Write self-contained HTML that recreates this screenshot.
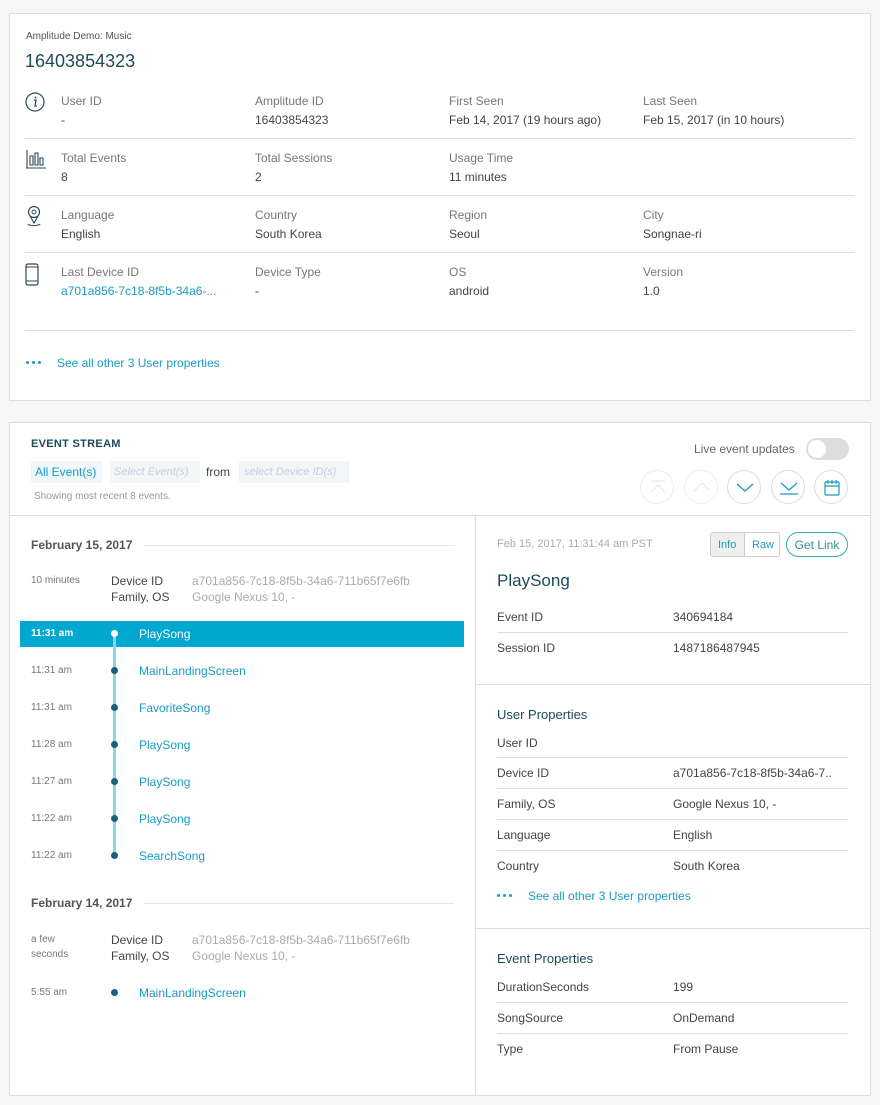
<!DOCTYPE html>
<html><head><style>
*{box-sizing:border-box;margin:0;padding:0}
body{width:880px;height:1105px;background:#f6f6f6;font-family:"Liberation Sans",sans-serif;position:relative;overflow:hidden;color:#444}
.a{position:absolute;white-space:nowrap;line-height:1}
.card{position:absolute;background:#fff;border:1px solid #ddd}
.lab{font-size:12px;color:#777}
.val{font-size:12px;color:#444}
.hl{position:absolute;height:1px;background:#ddd}
.link{color:#1a9ac4}
.t{font-size:10px;color:#777}
.ev{font-size:12px;color:#1a9ac4}
.dot{position:absolute;width:7px;height:7px;border-radius:50%;background:#15607a}
.cb{position:absolute;width:34px;height:34px;border-radius:50%;border:1px solid #ddd;background:#fff}
.dots{position:absolute;height:3px;display:flex;gap:3px}
.dots i{display:block;width:3px;height:3px;border-radius:50%;background:#1a9ac4}
</style></head><body>
<div class="card" style="left:9px;top:13px;width:862px;height:388px"></div>
<div class="a" style="left:26px;top:32px;font-size:10px;color:#555">Amplitude Demo: Music</div>
<div class="a" style="left:25px;top:52px;font-size:18px;color:#1d4a5a">16403854323</div>

<svg class="a" style="left:25px;top:92px" width="20" height="20"><circle cx="10" cy="10" r="9" fill="none" stroke="#2b4a57" stroke-width="1.2"/><circle cx="10.5" cy="5.5" r="1" fill="#2b4a57"/><path d="M9 8h2l-1 6h2" fill="none" stroke="#2b4a57" stroke-width="1.2"/></svg>
<svg class="a" style="left:25px;top:148px" width="22" height="22"><path d="M1 20h20M2 2v18M5 8v9h3V8zM10 5v12h3V5zM15 10v7h3v-7z" fill="none" stroke="#2b4a57" stroke-width="1.1"/></svg>
<svg class="a" style="left:25px;top:205px" width="18" height="24"><circle cx="9" cy="7" r="5.5" fill="none" stroke="#2b4a57" stroke-width="1.2"/><circle cx="9" cy="7" r="2" fill="none" stroke="#2b4a57"/><path d="M5 11l4 7 4-7M3 19c0 2 12 2 12 0" fill="none" stroke="#2b4a57" stroke-width="1.1"/></svg>
<svg class="a" style="left:25px;top:263px" width="14" height="23"><rect x="1" y="1" width="12" height="21" rx="2" fill="none" stroke="#2b4a57" stroke-width="1.2"/><path d="M1 4h12M1 18h12" stroke="#2b4a57"/></svg>

<div class="a lab" style="left:61px;top:95px">User ID</div><div class="a val" style="left:61px;top:114px">-</div>
<div class="a lab" style="left:255px;top:95px">Amplitude ID</div><div class="a val" style="left:255px;top:114px">16403854323</div>
<div class="a lab" style="left:449px;top:95px">First Seen</div><div class="a val" style="left:449px;top:114px">Feb 14, 2017 (19 hours ago)</div>
<div class="a lab" style="left:643px;top:95px">Last Seen</div><div class="a val" style="left:643px;top:114px">Feb 15, 2017 (in 10 hours)</div>
<div class="hl" style="left:25px;top:138px;width:829px"></div>
<div class="a lab" style="left:61px;top:152px">Total Events</div><div class="a val" style="left:61px;top:171px">8</div>
<div class="a lab" style="left:255px;top:152px">Total Sessions</div><div class="a val" style="left:255px;top:171px">2</div>
<div class="a lab" style="left:449px;top:152px">Usage Time</div><div class="a val" style="left:449px;top:171px">11 minutes</div>
<div class="hl" style="left:25px;top:195px;width:829px"></div>
<div class="a lab" style="left:61px;top:209px">Language</div><div class="a val" style="left:61px;top:228px">English</div>
<div class="a lab" style="left:255px;top:209px">Country</div><div class="a val" style="left:255px;top:228px">South Korea</div>
<div class="a lab" style="left:449px;top:209px">Region</div><div class="a val" style="left:449px;top:228px">Seoul</div>
<div class="a lab" style="left:643px;top:209px">City</div><div class="a val" style="left:643px;top:228px">Songnae-ri</div>
<div class="hl" style="left:25px;top:252px;width:829px"></div>
<div class="a lab" style="left:61px;top:266px">Last Device ID</div><div class="a val link" style="left:61px;top:285px">a701a856-7c18-8f5b-34a6-...</div>
<div class="a lab" style="left:255px;top:266px">Device Type</div><div class="a val" style="left:255px;top:285px">-</div>
<div class="a lab" style="left:449px;top:266px">OS</div><div class="a val" style="left:449px;top:285px">android</div>
<div class="a lab" style="left:643px;top:266px">Version</div><div class="a val" style="left:643px;top:285px">1.0</div>
<div class="hl" style="left:25px;top:330px;width:829px"></div>
<div class="dots" style="left:26px;top:361px"><i></i><i></i><i></i></div>
<div class="a link" style="left:57px;top:357px;font-size:12px">See all other 3 User properties</div>

<div class="card" style="left:9px;top:422px;width:862px;height:674px"></div>
<div class="a" style="left:31px;top:439px;font-size:11px;font-weight:bold;color:#1d4a5a;letter-spacing:.3px">EVENT STREAM</div>
<div class="a" style="left:31px;top:461px;width:71px;height:22px;background:#eef7fa;color:#1a9ac4;font-size:12px;padding:5px 4px">All Event(s)</div>
<div class="a" style="left:110px;top:461px;width:90px;height:22px;background:#f2f6f7;color:#ccd;font-size:11px;font-style:italic;padding:6px 4px">Select Event(s)</div>
<div class="a" style="left:206px;top:466px;font-size:12px;color:#444">from</div>
<div class="a" style="left:239px;top:461px;width:110px;height:22px;background:#f2f6f7;color:#ccd;font-size:11px;font-style:italic;padding:6px 5px">select Device ID(s)</div>
<div class="a" style="left:34px;top:492px;font-size:10px;color:#999">Showing most recent 8 events.</div>
<div class="a" style="left:694px;top:443px;font-size:12px;color:#666">Live event updates</div>
<div class="a" style="left:806px;top:438px;width:43px;height:22px;border-radius:11px;background:#ddd"><div style="position:absolute;left:2px;top:2px;width:18px;height:18px;border-radius:50%;background:#fff"></div></div>
<div class="cb" style="left:640px;top:470px;border-color:#eee"><svg width="34" height="34"><path d="M10 10h14M10 21l7-7 7 7" fill="none" stroke="#e6e6e6"/></svg></div>
<div class="cb" style="left:684px;top:470px;border-color:#eee"><svg width="34" height="34"><path d="M9 20l8-8 8 8" fill="none" stroke="#e6e6e6"/></svg></div>
<div class="cb" style="left:727px;top:470px"><svg width="34" height="34"><path d="M9 13l8 7 8-7" fill="none" stroke="#1a9ac4" stroke-width="1.3"/></svg></div>
<div class="cb" style="left:771px;top:470px"><svg width="34" height="34"><path d="M9 12l8 7 8-7M8 23h18" fill="none" stroke="#1a9ac4" stroke-width="1.3"/></svg></div>
<div class="cb" style="left:814px;top:470px"><svg width="34" height="34"><rect x="10" y="11" width="14" height="13" rx="1" fill="none" stroke="#1a9ac4" stroke-width="1.2"/><path d="M10 15h14M13 9v4M17 9v4M21 9v4" stroke="#1a9ac4" stroke-width="1.2"/></svg></div>
<div class="hl" style="left:10px;top:515px;width:860px"></div>
<div class="a" style="left:475px;top:516px;width:1px;height:579px;background:#ddd"></div>

<div class="a" style="left:31px;top:539px;font-size:12px;font-weight:bold;color:#555">February 15, 2017</div>
<div class="hl" style="left:144px;top:545px;width:310px;background:#e6e6e6"></div>
<div class="a t" style="left:31px;top:576px">10 minutes</div>
<div class="a" style="left:111px;top:575px;font-size:12px;color:#444">Device ID</div>
<div class="a" style="left:111px;top:591px;font-size:12px;color:#444">Family, OS</div>
<div class="a" style="left:192px;top:575px;font-size:12px;color:#aaa">a701a856-7c18-8f5b-34a6-711b65f7e6fb</div>
<div class="a" style="left:192px;top:591px;font-size:12px;color:#aaa">Google Nexus 10, -</div>
<div class="a" style="left:20px;top:621px;width:444px;height:26px;background:#00a7cf"></div>
<div class="a" style="left:113px;top:634px;width:3px;height:222px;background:#8dd3e6"></div>
<div class="a" style="left:31px;top:629px;font-size:10px;color:#fff;font-weight:bold">11:31 am</div>
<div class="dot" style="left:111px;top:630px;background:#fff"></div>
<div class="a" style="left:139px;top:628px;font-size:12px;color:#fff">PlaySong</div>
<div class="a t" style="left:31px;top:666px">11:31 am</div><div class="dot" style="left:111px;top:667px"></div><div class="a ev" style="left:139px;top:665px">MainLandingScreen</div>
<div class="a t" style="left:31px;top:703px">11:31 am</div><div class="dot" style="left:111px;top:704px"></div><div class="a ev" style="left:139px;top:702px">FavoriteSong</div>
<div class="a t" style="left:31px;top:740px">11:28 am</div><div class="dot" style="left:111px;top:741px"></div><div class="a ev" style="left:139px;top:739px">PlaySong</div>
<div class="a t" style="left:31px;top:777px">11:27 am</div><div class="dot" style="left:111px;top:778px"></div><div class="a ev" style="left:139px;top:776px">PlaySong</div>
<div class="a t" style="left:31px;top:814px">11:22 am</div><div class="dot" style="left:111px;top:815px"></div><div class="a ev" style="left:139px;top:813px">PlaySong</div>
<div class="a t" style="left:31px;top:851px">11:22 am</div><div class="dot" style="left:111px;top:852px"></div><div class="a ev" style="left:139px;top:850px">SearchSong</div>
<div class="a" style="left:31px;top:897px;font-size:12px;font-weight:bold;color:#555">February 14, 2017</div>
<div class="hl" style="left:144px;top:903px;width:310px;background:#e6e6e6"></div>
<div class="a t" style="left:31px;top:935px">a few</div><div class="a t" style="left:31px;top:950px">seconds</div>
<div class="a" style="left:111px;top:934px;font-size:12px;color:#444">Device ID</div>
<div class="a" style="left:111px;top:950px;font-size:12px;color:#444">Family, OS</div>
<div class="a" style="left:192px;top:934px;font-size:12px;color:#aaa">a701a856-7c18-8f5b-34a6-711b65f7e6fb</div>
<div class="a" style="left:192px;top:950px;font-size:12px;color:#aaa">Google Nexus 10, -</div>
<div class="a t" style="left:31px;top:988px">5:55 am</div><div class="dot" style="left:111px;top:989px"></div><div class="a ev" style="left:139px;top:987px">MainLandingScreen</div>

<div class="a" style="left:497px;top:539px;font-size:11px;color:#aaa">Feb 15, 2017, 11:31:44 am PST</div>
<div class="a" style="left:710px;top:532px;width:70px;height:25px;border:1px solid #ccc;border-radius:3px;overflow:hidden">
<div style="position:absolute;left:0;top:0;width:34px;height:23px;background:#eee;border-right:1px solid #ccc"></div>
<div style="position:absolute;left:7px;top:7px;font-size:11px;color:#1a9ac4">Info</div>
<div style="position:absolute;left:41px;top:7px;font-size:11px;color:#1a9ac4">Raw</div></div>
<div class="a" style="left:786px;top:532px;width:62px;height:25px;border:1.5px solid #2bb3a8;border-radius:13px;font-size:12px;color:#2b8f96;text-align:center;padding-top:6px">Get Link</div>
<div class="a" style="left:497px;top:572px;font-size:17px;color:#1d4a5a">PlaySong</div>
<div class="a val" style="left:497px;top:611px">Event ID</div><div class="a val" style="left:673px;top:611px">340694184</div>
<div class="hl" style="left:497px;top:632px;width:351px"></div>
<div class="a val" style="left:497px;top:642px">Session ID</div><div class="a val" style="left:673px;top:642px">1487186487945</div>
<div class="hl" style="left:476px;top:684px;width:394px"></div>
<div class="a" style="left:497px;top:708px;font-size:13px;color:#1d4a5a">User Properties</div>
<div class="a val" style="left:497px;top:737px">User ID</div>
<div class="hl" style="left:497px;top:757px;width:351px"></div>
<div class="a val" style="left:497px;top:767px">Device ID</div><div class="a val" style="left:673px;top:767px">a701a856-7c18-8f5b-34a6-7..</div>
<div class="hl" style="left:497px;top:788px;width:351px"></div>
<div class="a val" style="left:497px;top:798px">Family, OS</div><div class="a val" style="left:673px;top:798px">Google Nexus 10, -</div>
<div class="hl" style="left:497px;top:819px;width:351px"></div>
<div class="a val" style="left:497px;top:829px">Language</div><div class="a val" style="left:673px;top:829px">English</div>
<div class="hl" style="left:497px;top:850px;width:351px"></div>
<div class="a val" style="left:497px;top:860px">Country</div><div class="a val" style="left:673px;top:860px">South Korea</div>
<div class="dots" style="left:497px;top:894px"><i></i><i></i><i></i></div>
<div class="a link" style="left:528px;top:890px;font-size:12px">See all other 3 User properties</div>
<div class="hl" style="left:476px;top:928px;width:394px"></div>
<div class="a" style="left:497px;top:952px;font-size:13px;color:#1d4a5a">Event Properties</div>
<div class="a val" style="left:497px;top:981px">DurationSeconds</div><div class="a val" style="left:673px;top:981px">199</div>
<div class="hl" style="left:497px;top:1002px;width:351px"></div>
<div class="a val" style="left:497px;top:1012px">SongSource</div><div class="a val" style="left:673px;top:1012px">OnDemand</div>
<div class="hl" style="left:497px;top:1033px;width:351px"></div>
<div class="a val" style="left:497px;top:1043px">Type</div><div class="a val" style="left:673px;top:1043px">From Pause</div>
</body></html>
